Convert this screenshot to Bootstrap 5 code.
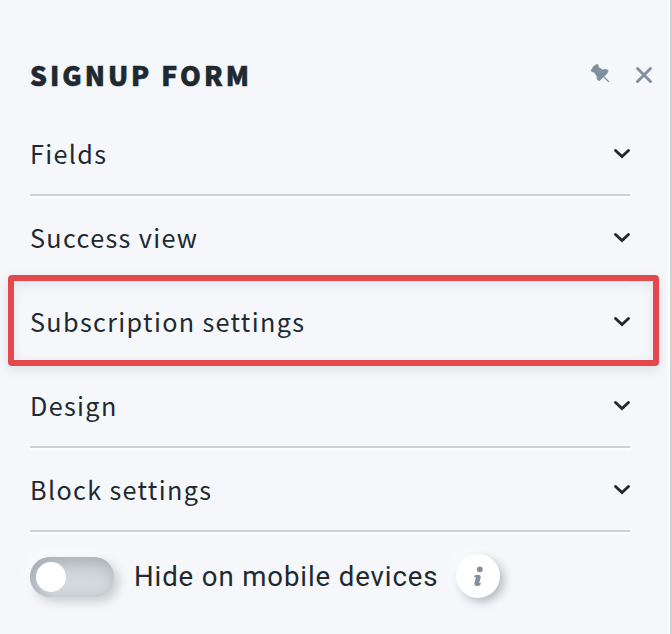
<!DOCTYPE html>
<html lang="en">
<head>
<meta charset="utf-8">
<meta name="viewport" content="width=device-width, initial-scale=1">
<title>Signup form</title>
<link href="https://cdn.jsdelivr.net/npm/bootstrap@5.3.0/dist/css/bootstrap.min.css" rel="stylesheet">
<style>
body{background:#f5f7fb;color:#212930;font-family:"Noto Sans CJK SC","Noto Sans",sans-serif;overflow:hidden}
.panel{height:634px;border-right:2px solid #d0d1d3;box-shadow:inset -2px 0 #fff;padding:0 12px 0 30px}
.panel-head{height:112px;padding-top:38px}
.panel-title{font-size:26.5px;font-weight:900;letter-spacing:3px;line-height:40px;padding-top:17px;-webkit-text-stroke:.6px #212930}
.tools{gap:21px;padding-top:23px;padding-right:4px}
.option{height:84px;width:600px;border-bottom:2px solid #d0d1d3;box-shadow:0 2px #fff;font-size:25.2px;letter-spacing:1.34px;line-height:36px}
.chevron{margin:2px -1px 0 0}
.outline-mark{position:absolute;left:-22px;top:-5px;width:651px;height:91px;border:6px solid #e5484c;border-radius:4px;box-shadow:0 4px 12px rgba(50,55,65,.12),inset 0 4px 12px rgba(50,55,65,.09);z-index:2}
.foot{height:88px;padding-top:2px}
.switch-track{width:84px;height:40px;border-radius:20px;padding:5px 6px;background:#d3dae0;box-shadow:inset 5px 6px 18px #a3abb1,5px 5px 10px rgba(120,120,120,.32),-4px -4px 10px #fbfbfa}
.switch-knob{width:30px;height:30px;background:#fff}
.switch-label{font:400 27.6px/36px Roboto,sans-serif;letter-spacing:.88px;margin-left:20px}
.info{width:44px;height:44px;background:#fff;border:0;padding:0;margin:0 0 3px 18px;box-shadow:4px 4px 8px rgba(100,105,115,.42),-4px -4px 10px #fbfbfa}
</style>
<script src="https://cdn.jsdelivr.net/npm/bootstrap@5.3.0/dist/js/bootstrap.bundle.min.js"></script>
</head>
<body>
<main class="panel">
  <header class="panel-head d-flex justify-content-between">
    <h1 class="panel-title m-0">SIGNUP FORM</h1>
    <div class="tools d-flex align-items-start">
      <svg class="mt-0" width="24" height="26" viewBox="0 0 24 26" fill="#8090a0" aria-label="Pin"><g transform="translate(0 2)"><path d="M4.4 3.6 7.9 1.3Q9.8 1.7 9.4 4.3L13.3 7Q17.5 5.6 19.2 7.5 18.7 9.8 17 11.6L10.2 17.8Q7.5 17.2 8 13.1L5 9Q2.3 9.3 2.2 7.2 3.4 6 4.4 3.6Z" stroke="#8090a0" stroke-width=".8" stroke-linejoin="round"/><path d="m14.6 13.6 5.2 5.2" stroke="#8090a0" stroke-width="1.3"/></g></svg>
      <svg width="20" height="24" viewBox="0 0 20 24" fill="none" stroke="#8090a0" stroke-width="2.9" stroke-linecap="round" aria-label="Close"><path d="m3.5 7.5 13 13M16.5 7.5l-13 13"/></svg>
    </div>
  </header>
  <section>
    <div class="option d-flex align-items-center justify-content-between"><span>Fields</span><svg class="chevron" width="18" height="12" viewBox="0 0 18 12" fill="none" stroke="#212930" stroke-width="2.9" stroke-linecap="round"><path d="m2.5 2.5 6.5 6 6.5-6"/></svg></div>
    <div class="option d-flex align-items-center justify-content-between"><span>Success view</span><svg class="chevron" width="18" height="12" viewBox="0 0 18 12" fill="none" stroke="#212930" stroke-width="2.9" stroke-linecap="round"><path d="m2.5 2.5 6.5 6 6.5-6"/></svg></div>
    <div class="option position-relative d-flex align-items-center justify-content-between"><span>Subscription settings</span><svg class="chevron" width="18" height="12" viewBox="0 0 18 12" fill="none" stroke="#212930" stroke-width="2.9" stroke-linecap="round"><path d="m2.5 2.5 6.5 6 6.5-6"/></svg><div class="outline-mark"></div></div>
    <div class="option d-flex align-items-center justify-content-between"><span>Design</span><svg class="chevron" width="18" height="12" viewBox="0 0 18 12" fill="none" stroke="#212930" stroke-width="2.9" stroke-linecap="round"><path d="m2.5 2.5 6.5 6 6.5-6"/></svg></div>
    <div class="option d-flex align-items-center justify-content-between"><span>Block settings</span><svg class="chevron" width="18" height="12" viewBox="0 0 18 12" fill="none" stroke="#212930" stroke-width="2.9" stroke-linecap="round"><path d="m2.5 2.5 6.5 6 6.5-6"/></svg></div>
  </section>
  <div class="foot d-flex align-items-center">
    <div class="switch-track flex-shrink-0" role="switch" aria-checked="false"><div class="switch-knob rounded-circle"></div></div>
    <span class="switch-label text-nowrap">Hide on mobile devices</span>
    <button class="info rounded-circle d-flex align-items-center justify-content-center" type="button" aria-label="Info"><svg width="12" height="22" viewBox="0 0 12 22" fill="#8090a0"><circle cx="7.8" cy="4.3" r="2.9"/><path d="M1.7 12.2Q2.6 9.8 5.2 9.8 9.4 9.6 8.6 13.1L7.4 17.3Q7.1 18.7 9.3 17.9 8.4 21 5.1 21 1.9 21 2.4 18L3.8 13.3Q4 11.7 1.7 12.2Z"/></svg></button>
  </div>
</main>
</body>
</html>
